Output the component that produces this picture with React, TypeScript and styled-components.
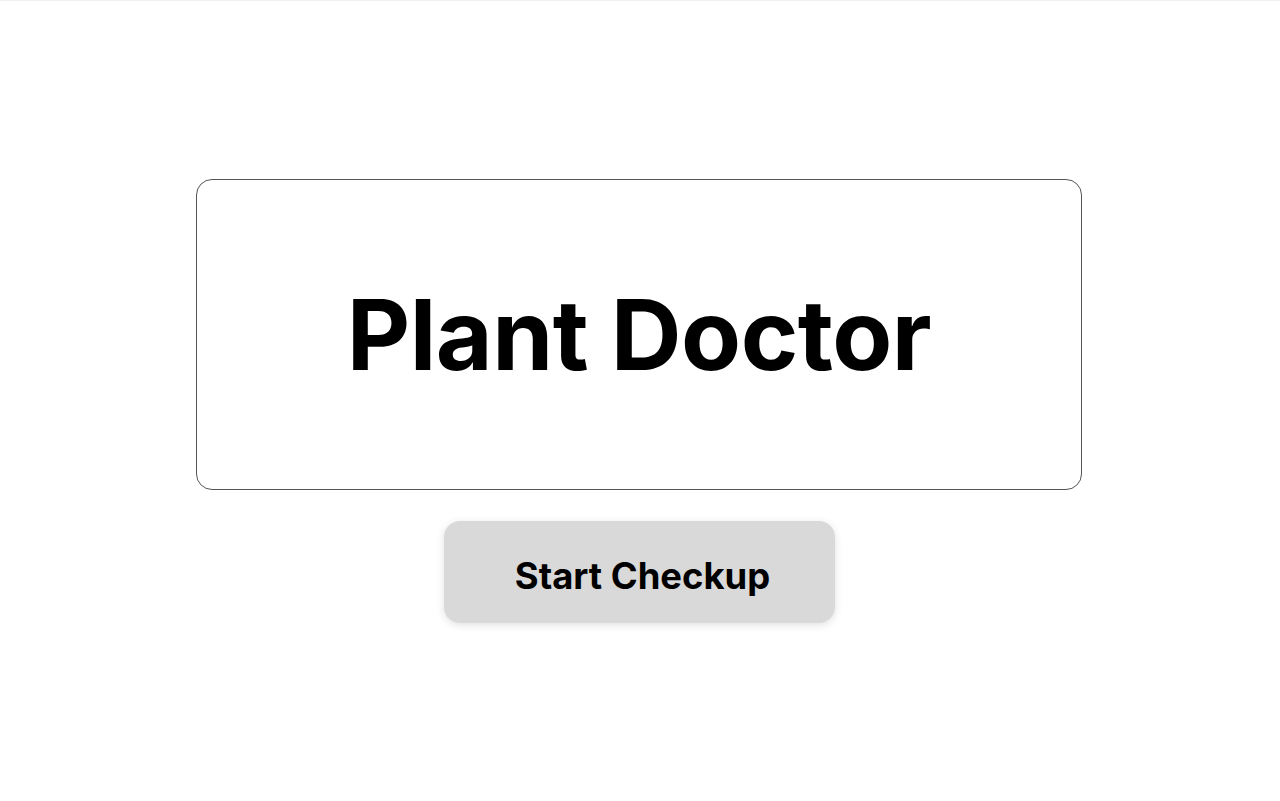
import React from "react";
import styled, { createGlobalStyle } from "styled-components";

const Global = createGlobalStyle`
  html, body { margin: 0; padding: 0; background: #ffffff; }
  body { font-family: Inter, "Noto Sans", sans-serif; }
`;

const Page = styled.main`
  box-sizing: border-box;
  min-height: 801px;
  border-top: 1px solid #f2f2f2;
  padding-right: 2px;
  display: flex;
  flex-direction: column;
  align-items: center;
  justify-content: center;
  gap: 31px;
`;

const Card = styled.section`
  box-sizing: border-box;
  width: 886px;
  height: 311px;
  border: 1px solid #555555;
  border-radius: 16px;
  display: flex;
  align-items: center;
  justify-content: center;
`;

const Title = styled.h1`
  margin: 0;
  font-family: Inter, sans-serif;
  font-weight: 700;
  font-size: 98px;
  color: #000000;
  letter-spacing: -0.5px;
`;

const StartButton = styled.button`
  box-sizing: border-box;
  width: 391px;
  height: 102px;
  border: none;
  border-radius: 16px;
  background: #d9d9d9;
  box-shadow: 0 2px 8px rgba(0, 0, 0, 0.12);
  font-family: Inter, sans-serif;
  font-weight: 700;
  font-size: 36.4px;
  color: #000000;
  padding: 8px 0 0 7px;
  cursor: pointer;
`;

export default function App() {
  return (
    <>
      <Global />
      <Page>
        <Card>
          <Title>Plant Doctor</Title>
        </Card>
        <StartButton>Start Checkup</StartButton>
      </Page>
    </>
  );
}
